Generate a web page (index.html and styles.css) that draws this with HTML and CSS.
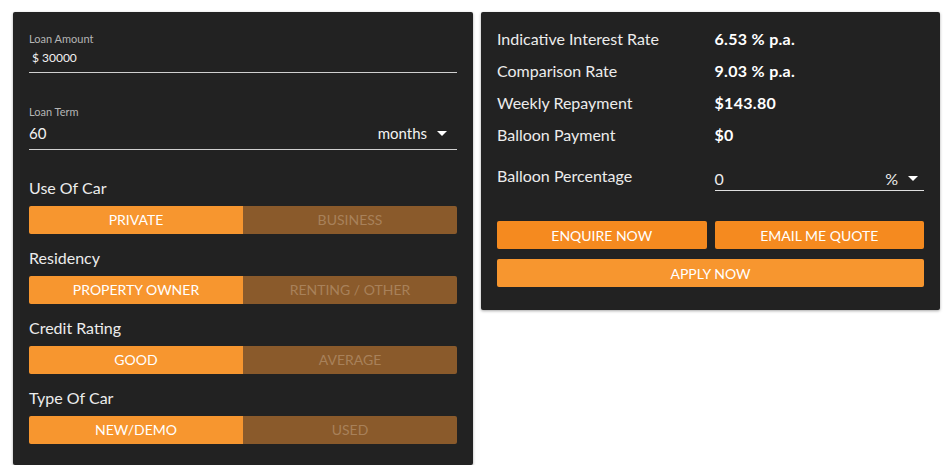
FILE: index.html
```html
<!DOCTYPE html>
<html>
<head>
<meta charset="utf-8">
<link rel="stylesheet" href="styles.css">
</head>
<body>
<div class="page">
  <section class="card card-left">
    <div class="field">
      <div class="field-label">Loan Amount</div>
      <div class="field-input amount"><span>$ 30000</span></div>
    </div>
    <div class="field field-term">
      <div class="field-label">Loan Term</div>
      <div class="field-input term">
        <span>60</span>
        <span class="select">months <i class="caret"></i></span>
      </div>
    </div>
    <div class="group">
      <div class="group-label">Use Of Car</div>
      <div class="toggle"><span class="on">PRIVATE</span><span class="off">BUSINESS</span></div>
    </div>
    <div class="group">
      <div class="group-label">Residency</div>
      <div class="toggle"><span class="on">PROPERTY OWNER</span><span class="off">RENTING / OTHER</span></div>
    </div>
    <div class="group">
      <div class="group-label">Credit Rating</div>
      <div class="toggle"><span class="on">GOOD</span><span class="off">AVERAGE</span></div>
    </div>
    <div class="group">
      <div class="group-label">Type Of Car</div>
      <div class="toggle"><span class="on">NEW/DEMO</span><span class="off">USED</span></div>
    </div>
  </section>
  <section class="card card-right">
    <div class="results">
      <div class="r-label">Indicative Interest Rate</div><div class="r-value">6.53 % p.a.</div>
      <div class="r-label">Comparison Rate</div><div class="r-value">9.03 % p.a.</div>
      <div class="r-label">Weekly Repayment</div><div class="r-value">$143.80</div>
      <div class="r-label">Balloon Payment</div><div class="r-value">$0</div>
    </div>
    <div class="balloon">
      <div class="r-label">Balloon Percentage</div>
      <div class="balloon-input"><span>0</span><span class="select">% <i class="caret"></i></span></div>
    </div>
    <div class="actions">
      <button class="btn btn-dark">ENQUIRE NOW</button>
      <button class="btn btn-dark">EMAIL ME QUOTE</button>
      <button class="btn btn-light btn-wide">APPLY NOW</button>
    </div>
  </section>
</div>
</body>
</html>
```
FILE: styles.css
```css
* { box-sizing: border-box; }
html, body { margin: 0; padding: 0; background: #fff; }
body {
  font-family: Lato, "Open Sans", "Liberation Sans", sans-serif;
  color: #ececec;
}
.page {
  display: flex;
  align-items: flex-start;
  gap: 8px;
  padding: 12px 0 0 13px;
}
.card {
  background: #222222;
  border-radius: 2px;
  box-shadow: 0 1px 3px rgba(0,0,0,0.35);
}
.card-left {
  width: 460px;
  padding: 20px 16px 21px;
}
.field-label {
  font-size: 11px;
  line-height: 14px;
  color: #b5b5b5;
}
.field-input {
  margin-top: 4px;
  border-bottom: 1px solid #d0d0d0;
  display: flex;
  justify-content: space-between;
  align-items: center;
}
.amount {
  font-size: 12px;
  line-height: 16px;
  padding: 0 0 6px 3px;
  color: #f2f2f2;
}
.field-term { margin-top: 32px; }
.term {
  font-size: 15px;
  line-height: 20px;
  padding-bottom: 6px;
  color: #f2f2f2;
}
.select {
  display: inline-flex;
  align-items: center;
  gap: 6px;
  padding-right: 10px;
}
.caret {
  display: inline-block;
  width: 0;
  height: 0;
  border-left: 5px solid transparent;
  border-right: 5px solid transparent;
  border-top: 5px solid #ffffff;
  margin-left: 4px;
}
.field-term + .group { margin-top: 26px; }
.group + .group { margin-top: 12px; }
.group-label {
  font-size: 16px;
  line-height: 24px;
  color: #ececec;
}
.toggle {
  margin-top: 6px;
  display: grid;
  grid-template-columns: 1fr 1fr;
  height: 28px;
  border-radius: 2px;
  overflow: hidden;
  font-size: 14px;
  line-height: 28px;
  text-align: center;
}
.toggle .on { background: #f7962f; color: #ffffff; }
.toggle .off { background: #8a5a2b; color: #a8815a; }

.card-right {
  width: 459px;
  padding: 11px 16px 23px;
}
.results {
  display: grid;
  grid-template-columns: 1fr 1fr;
  column-gap: 8px;
}
.r-label {
  font-size: 16px;
  line-height: 32px;
  color: #ececec;
}
.r-value {
  font-size: 16px;
  line-height: 32px;
  font-weight: 700;
  color: #ffffff;
  letter-spacing: 0.3px;
}
.balloon {
  margin-top: 9px;
  display: grid;
  grid-template-columns: 1fr 1fr;
  column-gap: 8px;
  align-items: start;
}
.balloon-input {
  margin-top: 5px;
  height: 26px;
  border-bottom: 1px solid #e0e0e0;
  display: flex;
  justify-content: space-between;
  align-items: flex-end;
  font-size: 16px;
  line-height: 20px;
  padding-bottom: 1px;
}
.balloon-input .select { padding-right: 6px; }
.balloon-input .caret { margin-bottom: 1px; }
.actions {
  margin-top: 29px;
  display: grid;
  grid-template-columns: 1fr 1fr;
  column-gap: 8px;
  row-gap: 10px;
}
.btn {
  height: 28px;
  border: none;
  border-radius: 2px;
  font-family: inherit;
  font-size: 14px;
  color: #ffffff;
  padding: 0;
  cursor: pointer;
}
.btn-dark { background: #f58a1f; }
.btn-light { background: #f7962f; }
.btn-wide { grid-column: 1 / span 2; }
```
